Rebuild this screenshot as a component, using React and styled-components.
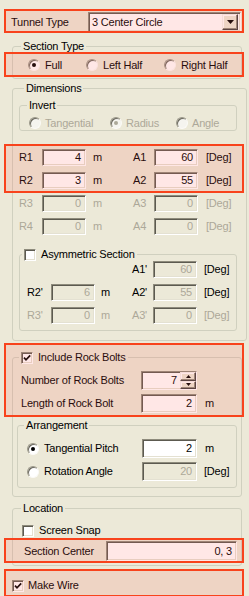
import React from 'react';
import styled, { createGlobalStyle } from 'styled-components';

const Global = createGlobalStyle`
  html, body { margin: 0; padding: 0; background: #ECE9D8; }
  body { font-family: "Liberation Sans", Arial, sans-serif; font-size: 11px; color: #000; }
  * { box-sizing: border-box; }
`;

const Panel = styled.div`
  position: relative;
  width: 249px;
  height: 596px;
  overflow: hidden;
  padding: 0 7px 0 12px;
  background: #ECE9D8;
  font-size: 11px;
  line-height: 13px;
  letter-spacing: -0.2px;
`;

const Mark = styled.div`
  position: absolute;
  left: 4px;
  width: 240px;
  top: ${(p) => p.$top}px;
  height: ${(p) => p.$h}px;
  border: 2px solid #F8431C;
  background: rgba(255, 95, 85, 0.15);
  pointer-events: none;
`;

const TopRow = styled.div`
  display: flex;
  align-items: center;
  height: 20px;
  margin: 12px 1px 0 -1px;
`;

const TopLabel = styled.span`
  width: 77px;
  flex: none;
`;

const sunken = `
  border: 1px solid;
  border-color: #8E8B7C #FFFFFF #FFFFFF #8E8B7C;
  box-shadow: inset 1px 1px 0 #5C5A50, inset -1px -1px 0 #E4E1D2;
`;

const raised = `
  border: 1px solid;
  border-color: #F4F3EE #404040 #404040 #F4F3EE;
  box-shadow: inset -1px -1px 0 #8E8B7C, inset 1px 1px 0 #FFFFFF;
  background: #ECE9D8;
`;

const Combo = styled.div`
  flex: 1;
  height: 20px;
  display: flex;
  align-items: center;
  background: #fff;
  padding: 0 2px 0 3px;
  ${sunken}
`;

const ComboText = styled.span`
  flex: 1;
`;

const DropBtn = styled.div`
  width: 16px;
  height: 16px;
  display: flex;
  align-items: center;
  justify-content: center;
  ${raised}
`;

const Group = styled.fieldset`
  margin: ${(p) => p.$mt}px ${(p) => p.$mr || 0}px 0 0;
  padding: ${(p) => p.$pad};
  border: 1px solid #D0D0BF;
  border-radius: 3px;
  min-width: 0;
`;

const Legend = styled.legend`
  padding: 0 2px;
  margin-left: ${(p) => p.$ml}px;
  line-height: 13px;
  height: 13px;
  white-space: nowrap;
`;

const RadioRow = styled.div`
  display: grid;
  grid-template-columns: ${(p) => p.$cols};
  align-items: center;
  height: ${(p) => p.$h}px;
`;

const Item = styled.label`
  display: flex;
  align-items: center;
  gap: ${(p) => p.$gap || 5}px;
  white-space: nowrap;
  color: ${(p) => (p.$dis ? '#ACA899' : '#000')};
  height: ${(p) => p.$h || 13}px;
`;

const Circle = styled.span`
  flex: none;
  width: 12px;
  height: 12px;
  border-radius: 50%;
  background: ${(p) => (p.$dis ? '#F5F4EF' : '#FFFFFF')};
  border: 1px solid;
  border-color: #9A9788 #FBFAF6 #FBFAF6 #9A9788;
  box-shadow: inset 1px 1px 0 #6A685E;
  display: flex;
  align-items: center;
  justify-content: center;
  &::after {
    content: '';
    width: 4px;
    height: 4px;
    border-radius: 50%;
    background: ${(p) => (p.$dis ? '#ACA899' : '#000')};
    display: ${(p) => (p.$on ? 'block' : 'none')};
  }
`;

const Box = styled.span`
  flex: none;
  width: 12px;
  height: 12px;
  background: #fff;
  display: inline-flex;
  align-items: center;
  justify-content: center;
  vertical-align: middle;
  ${sunken}
`;

const Grid = styled.div`
  display: grid;
  grid-template-columns: ${(p) => p.$cols};
  grid-auto-rows: ${(p) => p.$rh}px;
  row-gap: ${(p) => p.$gap}px;
  align-items: center;
  margin-top: ${(p) => p.$mt || 0}px;
`;

const Lbl = styled.span`
  color: ${(p) => (p.$dis ? '#ACA899' : '#000')};
  padding-left: ${(p) => p.$pl || 0}px;
  white-space: nowrap;
`;

const Field = styled.div`
  height: 100%;
  display: flex;
  align-items: center;
  justify-content: flex-end;
  padding-right: 4px;
  background: ${(p) => (p.$dis ? '#ECE9D8' : '#FFFFFF')};
  color: ${(p) => (p.$dis ? '#ACA899' : '#000')};
  ${sunken}
`;

const SpinField = styled(Field)`
  padding-right: 0;
  gap: 3px;
`;

const SpinBtns = styled.div`
  width: 16px;
  height: 100%;
  display: flex;
  flex-direction: column;
`;

const SpinBtn = styled.div`
  flex: 1;
  display: flex;
  align-items: center;
  justify-content: center;
  ${raised}
`;

const FlatRow = styled.div`
  display: flex;
  align-items: center;
  height: ${(p) => p.$h}px;
  margin-top: ${(p) => p.$mt || 0}px;
`;

const Tick = () => (
  <svg width="8" height="8" viewBox="0 0 8 8">
    <path d="M1 3.6 L3 5.8 L7.2 1.4" fill="none" stroke="#000" strokeWidth="1.7" />
  </svg>
);

const Radio = ({ on, dis, label, gap }) => (
  <Item $dis={dis} $gap={gap}>
    <Circle $on={on} $dis={dis} />
    {label}
  </Item>
);

const Check = ({ on, label, gap }) => (
  <Item $gap={gap}>
    <Box>{on && <Tick />}</Box>
    {label}
  </Item>
);

const Tri = ({ up }) => (
  <svg width="5" height="3" viewBox="0 0 5 3">
    <path d={up ? 'M0 3h5L2.5 0z' : 'M0 0h5L2.5 3z'} fill="#000" />
  </svg>
);

const mainRows = [
  { r: 'R1', rv: '4', a: 'A1', av: '60' },
  { r: 'R2', rv: '3', a: 'A2', av: '55' },
  { r: 'R3', rv: '0', a: 'A3', av: '0', dis: true },
  { r: 'R4', rv: '0', a: 'A4', av: '0', dis: true },
];

const marks = [
  [9, 24],
  [52, 25],
  [144, 49],
  [343, 74],
  [538, 25],
  [569, 28],
];

export default function App() {
  return (
    <>
      <Global />
      <Panel>
        <TopRow>
          <TopLabel>Tunnel Type</TopLabel>
          <Combo>
            <ComboText>3 Center Circle</ComboText>
            <DropBtn>
              <svg width="7" height="4" viewBox="0 0 7 4">
                <path d="M0 0h7L3.5 4z" fill="#000" />
              </svg>
            </DropBtn>
          </Combo>
        </TopRow>

        <Group $mt={8} $pad="4px 4px 5px 15px">
          <Legend $ml={-7}>Section Type</Legend>
          <RadioRow $cols="58px 78px auto" $h={16}>
            <Radio on label="Full" />
            <Radio label="Left Half" />
            <Radio label="Right Half" />
          </RadioRow>
        </Group>

        <Group $mt={3} $mr={-5} $pad="4px 9px 9px 6px">
          <Legend $ml={5}>Dimensions</Legend>
          <Group $mt={0} $pad="4px 4px 0 9px">
            <Legend $ml={-2}>Invert</Legend>
            <RadioRow $cols="81px 66px auto" $h={14}>
              <Radio dis gap={4} label="Tangential" />
              <Radio dis on gap={4} label="Radius" />
              <Radio dis gap={4} label="Angle" />
            </RadioRow>
          </Group>

          <Grid $cols="23px 44px 47px 21px 44px auto" $rh={17} $gap={6} $mt={18}>
            {mainRows.map((row) => (
              <React.Fragment key={row.r}>
                <Lbl $dis={row.dis}>{row.r}</Lbl>
                <Field $dis={row.dis}>{row.rv}</Field>
                <Lbl $dis={row.dis} $pl={7}>m</Lbl>
                <Lbl $dis={row.dis}>{row.a}</Lbl>
                <Field $dis={row.dis}>{row.av}</Field>
                <Lbl $dis={row.dis} $pl={8}>[Deg]</Lbl>
              </React.Fragment>
            ))}
          </Grid>

          <Group $mt={13} $pad="0 4px 6px 7px">
            <Legend $ml={-5}>
              <Check label="Asymmetric Section" />
            </Legend>
            <Grid $cols="24px 44px 37px 21px 44px auto" $rh={17} $gap={6}>
              <span />
              <span />
              <span />
              <Lbl>A1'</Lbl>
              <Field $dis>60</Field>
              <Lbl $pl={7}>[Deg]</Lbl>

              <Lbl>R2'</Lbl>
              <Field $dis>6</Field>
              <Lbl $pl={6}>m</Lbl>
              <Lbl>A2'</Lbl>
              <Field $dis>55</Field>
              <Lbl $pl={7}>[Deg]</Lbl>

              <Lbl $dis>R3'</Lbl>
              <Field $dis>0</Field>
              <Lbl $dis $pl={6}>m</Lbl>
              <Lbl $dis>A3'</Lbl>
              <Field $dis>0</Field>
              <Lbl $dis $pl={7}>[Deg]</Lbl>
            </Grid>
          </Group>
        </Group>

        <Group $mt={10} $pad="7px 4px 8px 4px">
          <Legend $ml={2}>
            <Check on label="Include Rock Bolts" />
          </Legend>
          <Grid $cols="124px 56px auto" $rh={19} $gap={4}>
            <Lbl $pl={4}>Number of Rock Bolts</Lbl>
            <SpinField>
              7
              <SpinBtns>
                <SpinBtn>
                  <Tri up />
                </SpinBtn>
                <SpinBtn>
                  <Tri />
                </SpinBtn>
              </SpinBtns>
            </SpinField>
            <span />
            <Lbl $pl={4}>Length of Rock Bolt</Lbl>
            <Field>2</Field>
            <Lbl $pl={8}>m</Lbl>
          </Grid>

          <Group $mt={6} $pad="7px 4px 6px 9px">
            <Legend $ml={-3}>Arrangement</Legend>
            <Grid $cols="115px 55px auto" $rh={19} $gap={4}>
              <Radio on label="Tangential Pitch" />
              <Field>2</Field>
              <Lbl $pl={8}>m</Lbl>
              <Radio label="Rotation Angle" />
              <Field $dis>20</Field>
              <Lbl $pl={7}>[Deg]</Lbl>
            </Grid>
          </Group>
        </Group>

        <Group $mt={5} $pad="9px 4px 4px 9px">
          <Legend $ml={-1}>Location</Legend>
          <Check label="Screen Snap" />
          <Grid $cols="84px 1fr" $rh={20} $gap={0} $mt={4}>
            <Lbl $pl={2}>Section Center</Lbl>
            <Field>0, 3</Field>
          </Grid>
        </Group>

        <FlatRow $h={13} $mt={13}>
          <Check on gap={4} label="Make Wire" />
        </FlatRow>

        {marks.map(([t, h]) => (
          <Mark key={t} $top={t} $h={h} />
        ))}
      </Panel>
    </>
  );
}
